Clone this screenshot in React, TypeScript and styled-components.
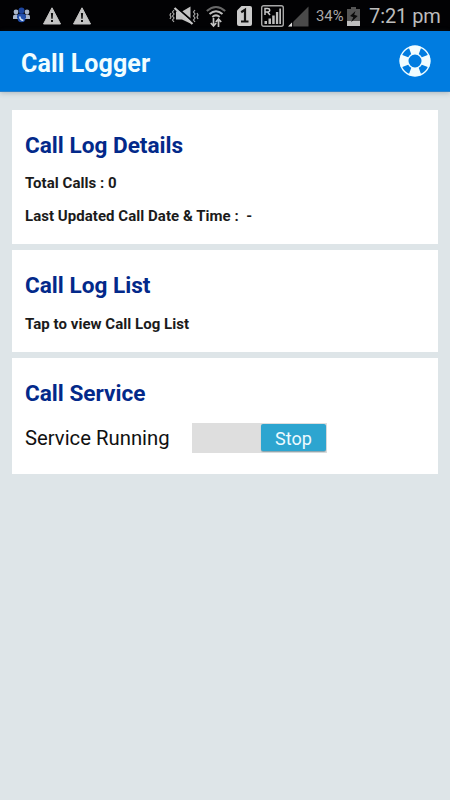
import React from "react";
import styled, { createGlobalStyle } from "styled-components";

const GlobalStyle = createGlobalStyle`
  * { box-sizing: border-box; }
  body { margin: 0; background: #dee5e8; font-family: Roboto, "Liberation Sans", sans-serif; }
`;

const Screen = styled.div`
  display: flex;
  flex-direction: column;
  width: 450px;
  height: 800px;
  overflow: hidden;
  background: #dee5e8;
`;

const StatusBar = styled.header`
  display: flex;
  align-items: center;
  justify-content: space-between;
  flex: none;
  height: 31px;
  padding: 0 10px 0 12px;
  background: #020204;
  color: #b9b9b9;
  white-space: nowrap;
`;

const Notifications = styled.div`
  display: flex;
  align-items: center;
  gap: 12px;
`;

const SystemIcons = styled.div`
  display: grid;
  grid-template-columns: 37px 31px 24px 27px 28px 31px 22px 71px;
  align-items: center;
  height: 31px;
`;

const Glyph = styled.svg`
  display: block;
  flex: none;
`;

const Percent = styled.span`
  font-size: 14.8px;
  line-height: 31px;
  color: #aaa;
  padding-top: 1px;
`;

const Clock = styled.span`
  font-size: 20px;
  line-height: 31px;
  letter-spacing: -0.08px;
  padding-top: 1px;
  color: #bdbdbd;
`;

const AppBar = styled.div`
  display: flex;
  align-items: center;
  justify-content: space-between;
  flex: none;
  height: 61px;
  padding: 0 19px 0 21px;
  background: #007ce0;
  border-bottom: 1px solid #2b82cc;
  box-shadow: 0 1px 5px rgba(60, 80, 90, 0.3);
`;

const AppTitle = styled.h1`
  margin: 5px 0 0;
  font-size: 25px;
  line-height: 30px;
  letter-spacing: 0.1px;
  font-weight: 700;
  color: #f0fdff;
`;

const CardList = styled.main`
  display: flex;
  flex-direction: column;
  gap: 6px;
  padding: 18px 12px 0;
`;

const Card = styled.section<{ $height: number }>`
  height: ${({ $height }) => $height}px;
  padding: 21px 13px 0;
  background: #fff;
`;

const CardTitle = styled.h2`
  margin: 0;
  font-size: 22.6px;
  line-height: 30px;
  font-weight: 700;
  color: #03298a;
`;

const Detail = styled.p<{ $gap: number }>`
  margin: ${({ $gap }) => $gap}px 0 0;
  font-size: 15px;
  line-height: 20px;
  letter-spacing: 0.04px;
  font-weight: 700;
  color: #1b1b1b;
  white-space: pre;
`;

const ServiceRow = styled.div`
  display: flex;
  align-items: center;
  margin-top: 14px;
  height: 30px;
`;

const ServiceLabel = styled.span`
  width: 167px;
  font-size: 20.3px;
  line-height: 30px;
  color: #111;
`;

const Toggle = styled.button`
  display: flex;
  justify-content: flex-end;
  width: 135px;
  height: 30px;
  padding: 1px;
  border: 0;
  background: #dedede;
  font-family: inherit;
`;

const ToggleThumb = styled.span`
  width: 65px;
  height: 27px;
  border-radius: 2px;
  background: #2da5d0;
  box-shadow: 0 1px 1px rgba(30, 90, 110, 0.45);
  color: #edfaff;
  font-size: 18px;
  line-height: 29px;
  text-align: center;
`;

const People = () => (
  <Glyph width="19" height="17" viewBox="0 0 19 17">
    <g fill="#a9b6cb">
      <circle cx="4" cy="5" r="2.4" />
      <circle cx="15" cy="5" r="2.4" />
      <path d="M1 12V10Q1 7.6 4 7.6T7 10V12ZM12 12V10Q12 7.6 15 7.6T18 10V12Z" />
    </g>
    <circle cx="9.5" cy="3.6" r="3" fill="#1d459e" />
    <path d="M5 11V9.5Q5 6.2 9.5 6.2T14 9.5V11Z" fill="#1d459e" />
    <circle cx="9.5" cy="11.3" r="4" fill="#2451ad" />
    <path d="M7.8 9.5Q8 13 11.4 13.3" fill="none" stroke="#d5e2f5" strokeWidth="1.7" />
  </Glyph>
);

const Warning = () => (
  <Glyph width="18" height="18" viewBox="0 0 18 18">
    <path d="M9 .8 17.5 17H.5Z" fill="#c4c4c4" stroke="#c4c4c4" strokeLinejoin="round" />
    <path d="M7.9 6H10.1L9.7 11.7H8.3ZM8 13H10V15H8Z" fill="#111" />
  </Glyph>
);

const Muted = () => (
  <Glyph width="31" height="20" viewBox="0 0 31 20">
    <path d="M7 5.5H13L21.5 .5V17.5L13 13.5H7Z" fill="#c2c2c2" />
    <path d="M6.5 .5 25 16.5" stroke="#020204" strokeWidth="1.8" />
    <path d="M5.5 2 23.5 18" stroke="#c8c8c8" strokeWidth="2.2" />
    <path d="M5 4 3.5 6 5 8 3.5 10 5 12 3.5 14 5 16M2 7 1 9 2 11 1 13M26 4 24.5 6 26 8 24.5 10 26 12 24.5 14 26 16M28 7 29 9 28 11 29 13" fill="none" stroke="#a5a5a5" strokeWidth="1.2" />
  </Glyph>
);

const Wifi = () => (
  <Glyph width="20" height="23" viewBox="0 0 20 23">
    <g fill="none" strokeWidth="2">
      <path d="M.8 6Q10-2 19.2 6" stroke="#686868" />
      <path d="M3.5 9Q10 3.4 16.5 9M6.3 12Q10 8.8 13.7 12" stroke="#bebebe" />
    </g>
    <path d="M7.5 13V20M4.8 18 7.5 21 10.2 18M12.5 22V15M9.8 17 12.5 14 15.2 17" fill="none" stroke="#c4c4c4" strokeWidth="1.7" />
  </Glyph>
);

const SimCard = () => (
  <Glyph width="15" height="20" viewBox="0 0 15 20">
    <path d="M4.5 0H13Q15 0 15 2V18Q15 20 13 20H2Q0 20 0 18V4.5Z" fill="#cbcbcb" />
    <path d="M4.2 6.2 8 3.8V15.5M4 15.5H11.5" fill="none" stroke="#111" strokeWidth="2.2" />
  </Glyph>
);

const RoamingSignal = () => (
  <Glyph width="23" height="22" viewBox="0 0 23 22">
    <rect x=".7" y=".7" width="21.6" height="20.6" rx="2" fill="none" stroke="#a7a7a7" strokeWidth="1.4" />
    <path d="M4 10V3.5H6.5Q8.7 3.5 8.7 5.2T6.5 7H4M6.5 7 9 10" fill="none" stroke="#c8c8c8" strokeWidth="1.5" />
    <path d="M3.5 16H6V19H3.5ZM7.5 13.5H10V19H7.5ZM11.2 10.5H13.7V19H11.2ZM14.9 7H17.2V19H14.9ZM18.3 3.5H20V19H18.3Z" fill="#bdbdbd" />
  </Glyph>
);

const WeakSignal = () => (
  <Glyph width="21" height="21" viewBox="0 0 21 21">
    <path d="M20.5 .5V20.5H.5Z" fill="#4a4a4a" />
    <path d="M4.2 16.3V20.5H0Z" fill="#dedede" />
    <path d="M4.7 15V21" stroke="#020204" />
  </Glyph>
);

const Battery = () => (
  <Glyph width="13" height="19" viewBox="0 0 13 19">
    <path d="M4 0H9V2H13V19H0V2H4Z" fill="#555" />
    <path d="M0 14H13V19H0Z" fill="#bfbfbf" />
    <path d="M8.5 4 3 9 6.3 10.2 4 15.3 10.7 9 7.2 7.8Z" fill="#0b0b0b" />
  </Glyph>
);

const Lifebuoy = () => (
  <Glyph width="32" height="32" viewBox="0 0 32 32">
    <circle cx="16" cy="16" r="14.8" fill="none" stroke="#e9faff" strokeWidth="1.4" />
    <circle cx="16" cy="16" r="7.2" fill="none" stroke="#e9faff" strokeWidth="1.4" />
    <g fill="#f2fdff">
      <path d="M9.6 2Q16-.9 22.4 2L19.5 9.8Q16 8 12.5 9.8Z" />
      <path d="M9.6 30Q16 32.9 22.4 30L19.5 22.2Q16 24 12.5 22.2Z" />
      <path d="M2 9.6Q-.9 16 2 22.4L9.8 19.5Q8 16 9.8 12.5Z" />
      <path d="M30 9.6Q32.9 16 30 22.4L22.2 19.5Q24 16 22.2 12.5Z" />
    </g>
  </Glyph>
);

export default function App() {
  return (
    <>
      <GlobalStyle />
      <Screen>
        <StatusBar>
          <Notifications>
            <People />
            <Warning />
            <Warning />
          </Notifications>
          <SystemIcons>
            <Muted />
            <Wifi />
            <SimCard />
            <RoamingSignal />
            <WeakSignal />
            <Percent>34%</Percent>
            <Battery />
            <Clock>7:21 pm</Clock>
          </SystemIcons>
        </StatusBar>
        <AppBar>
          <AppTitle>Call Logger</AppTitle>
          <Lifebuoy />
        </AppBar>
        <CardList>
          <Card $height={134}>
            <CardTitle>Call Log Details</CardTitle>
            <Detail $gap={12}>Total Calls : 0</Detail>
            <Detail $gap={13}>{"Last Updated Call Date & Time :  -"}</Detail>
          </Card>
          <Card $height={102}>
            <CardTitle>Call Log List</CardTitle>
            <Detail $gap={13}>Tap to view Call Log List</Detail>
          </Card>
          <Card $height={116}>
            <CardTitle>Call Service</CardTitle>
            <ServiceRow>
              <ServiceLabel>Service Running</ServiceLabel>
              <Toggle>
                <ToggleThumb>Stop</ToggleThumb>
              </Toggle>
            </ServiceRow>
          </Card>
        </CardList>
      </Screen>
    </>
  );
}
